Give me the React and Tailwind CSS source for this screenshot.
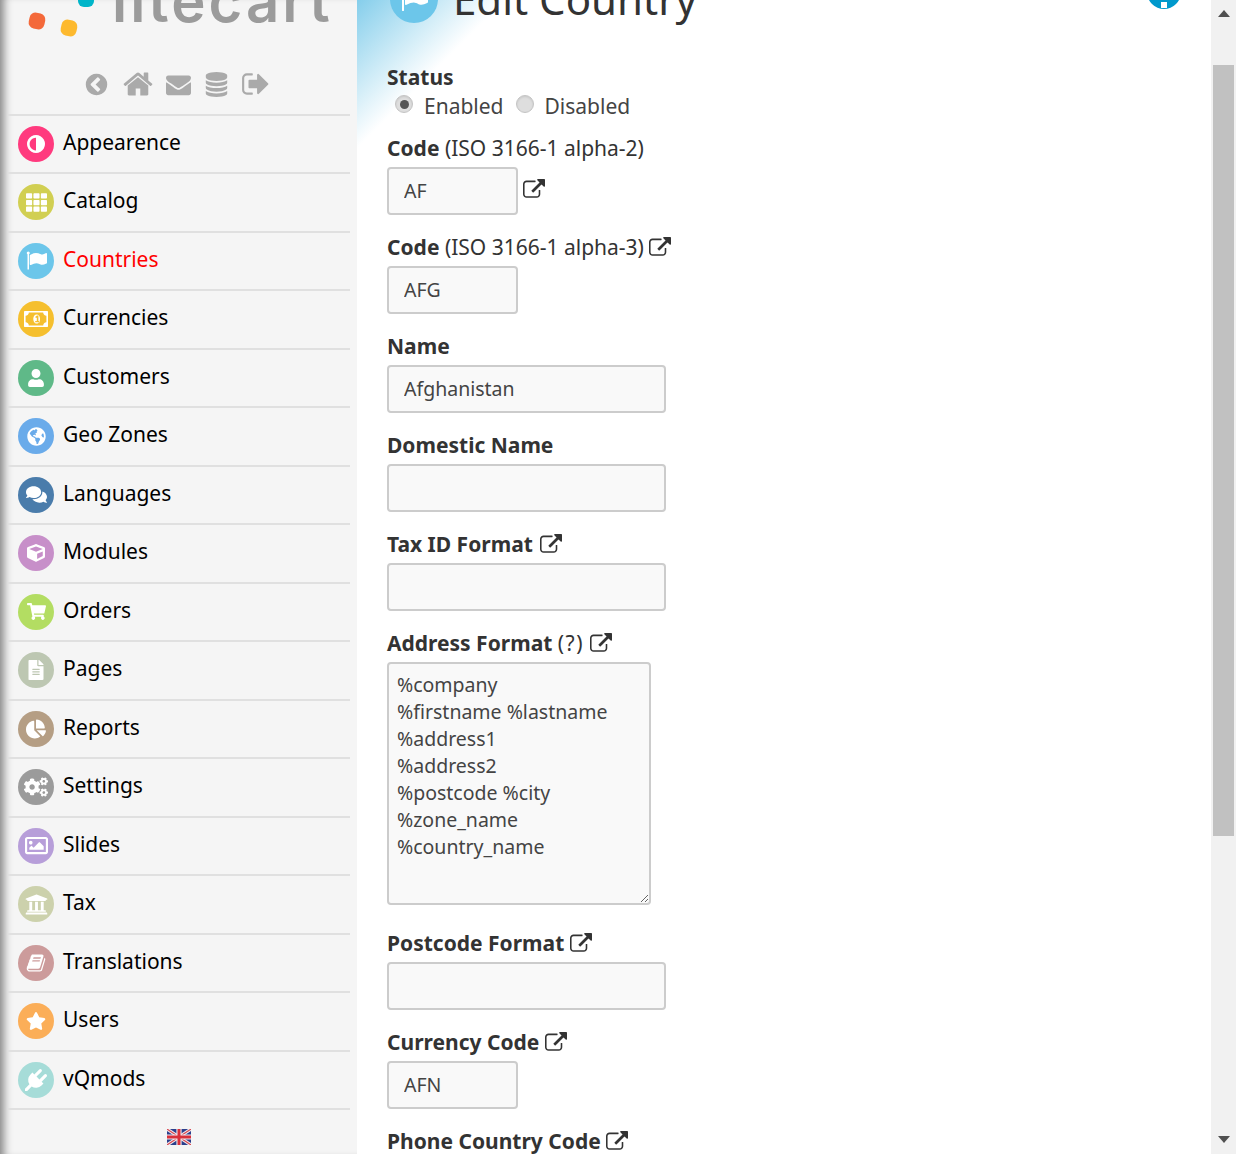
import {
  FaTh, FaUser, FaGlobeAmericas, FaComments, FaCube, FaShoppingCart,
  FaFileAlt, FaChartPie, FaCogs, FaRegImage, FaUniversity, FaStar,
} from 'react-icons/fa';

// Font Awesome 4 glyphs that the icon packages no longer carry
const Fa4 = ({ d, size, viewBox = '0 0 1792 1792', className = '' }) => (
  <svg width={size} height={size} viewBox={viewBox} fill="currentColor" className={className}>
    <path d={d} />
  </svg>
);

const paths = {
  link: 'M1408 928v320q0 119-84.5 203.5t-203.5 84.5h-832q-119 0-203.5-84.5t-84.5-203.5v-832q0-119 84.5-203.5t203.5-84.5h704q14 0 23 9t9 23v64q0 14-9 23t-23 9h-704q-66 0-113 47t-47 113v832q0 66 47 113t113 47h832q66 0 113-47t47-113v-320q0-14 9-23t23-9h64q14 0 23 9t9 23zm384-864v512q0 26-19 45t-45 19-45-19l-176-176-652 652q-10 10-23 10t-23-10l-114-114q-10-10-10-23t10-23l652-652-176-176q-19-19-19-45t19-45 45-19h512q26 0 45 19t19 45z',
  back: 'M1037 1395l102-102q19-19 19-45t-19-45l-307-307 307-307q19-19 19-45t-19-45l-102-102q-19-19-45-19t-45 19l-454 454q-19 19-19 45t19 45l454 454q19 19 45 19t45-19zm627-499q0 209-103 385.5t-279.5 279.5-385.5 103-385.5-103-279.5-279.5-103-385.5 103-385.5 279.5-279.5 385.5-103 385.5 103 279.5 279.5 103 385.5z',
  home: 'M1472 992v480q0 26-19 45t-45 19h-384v-384h-256v384h-384q-26 0-45-19t-19-45v-480q0-1 .5-3t.5-3l575-474 575 474q1 2 1 6zm223-69l-62 74q-8 9-21 11h-3q-13 0-21-7l-692-577-692 577q-12 8-24 7-13-2-21-11l-62-74q-8-10-7-23.5t11-21.5l719-599q32-26 76-26t76 26l244 204v-195q0-14 9-23t23-9h192q14 0 23 9t9 23v408l219 182q10 8 11 21.5t-7 23.5z',
  mail: 'M1792 710v794q0 66-47 113t-113 47h-1472q-66 0-113-47t-47-113v-794q44 49 101 87 362 246 497 345 57 42 92.5 65.5t94.5 48 110 24.5h2q51 0 110-24.5t94.5-48 92.5-65.5q170-123 498-345 57-39 100-87zm0-294q0 79-49 151t-122 123q-376 261-468 325-10 7-42.5 30.5t-54 38-52 32.5-57.5 27-50 9h-2q-23 0-50-9t-57.5-27-52-32.5-54-38-42.5-30.5q-91-64-262-182.5t-205-142.5q-62-42-117-115.5t-55-136.5q0-78 41.5-130t118.5-52h1472q65 0 112.5 47t47.5 113z',
  db: 'M896 768q237 0 443-43t325-127v170q0 69-103 128t-280 93.5-385 34.5-385-34.5-280-93.5-103-128v-170q119 84 325 127t443 43zm0 768q237 0 443-43t325-127v170q0 69-103 128t-280 93.5-385 34.5-385-34.5-280-93.5-103-128v-170q119 84 325 127t443 43zm0-384q237 0 443-43t325-127v170q0 69-103 128t-280 93.5-385 34.5-385-34.5-280-93.5-103-128v-170q119 84 325 127t443 43zm0-1152q208 0 385 34.5t280 93.5 103 128v128q0 69-103 128t-280 93.5-385 34.5-385-34.5-280-93.5-103-128v-128q0-69 103-128t280-93.5 385-34.5z',
  out: 'M704 1440q0 4 1 20t.5 26.5-3 23.5-10 19.5-20.5 6.5h-320q-119 0-203.5-84.5t-84.5-203.5v-704q0-119 84.5-203.5t203.5-84.5h320q13 0 22.5 9.5t9.5 22.5q0 4 1 20t.5 26.5-3 23.5-10 19.5-20.5 6.5h-320q-66 0-113 47t-47 113v704q0 66 47 113t113 47h312l11.5 1 11.5 3 8 5.5 7 9 2 13.5zm928-544q0 26-19 45l-544 544q-19 19-45 19t-45-19-19-45v-288h-448q-26 0-45-19t-19-45v-384q0-26 19-45t45-19h448v-288q0-26 19-45t45-19 45 19l544 544q19 19 19 45z',
  adjust: 'M768 1312v-1088q-148 0-273 73t-198 198-73 273 73 273 198 198 273 73zm768-544q0 209-103 385.5t-279.5 279.5-385.5 103-385.5-103-279.5-279.5-103-385.5 103-385.5 279.5-279.5 385.5-103 385.5 103 279.5 279.5 103 385.5z',
  plug: 'M1755 453q37 38 37 90.5t-37 90.5l-401 400 150 150-160 160q-163 163-389.5 186.5t-411.5-100.5l-362 362h-181v-181l362-362q-124-185-100.5-411.5t186.5-389.5l160-160 150 150 400-401q38-37 91-37t90 37 37 90.5-37 90.5l-400 401 234 234 401-400q38-37 91-37t90 37z',
  book: 'M1703 478q40 57 18 129l-275 906q-19 64-76.5 107.5t-122.5 43.5h-923q-77 0-148.5-53.5t-99.5-131.5q-24-67-2-127 0-4 3-27t4-37q1-8-3-21.5t-3-19.5q2-11 8-21t16.5-23.5 16.5-23.5q23-38 45-91.5t30-91.5q3-10 .5-30t-.5-28q3-11 17-28t17-23q21-36 42-92t25-90q1-9-2.5-32t.5-28q4-13 22-30.5t22-22.5q19-26 42.5-84.5t27.5-96.5q1-8-3-25.5t-2-26.5q2-8 9-18t18-23 17-21q8-12 16.5-30.5t15-35 16-36 19.5-32 26.5-23.5 36-11.5 47.5 5.5l-1 3q38-9 51-9h761q74 0 114 56t18 130l-274 906q-36 119-71.5 153.5t-128.5 34.5h-869q-27 0-38 15-11 16-1 43 24 70 144 70h923q29 0 56-15.5t35-41.5l300-987q7-22 5-57 38 15 59 43zm-1064 2q-4 13 2 22.5t20 9.5h608q13 0 25.5-9.5t16.5-22.5l21-64q4-13-2-22.5t-20-9.5h-608q-13 0-25.5 9.5t-16.5 22.5zm-83 256q-4 13 2 22.5t20 9.5h608q13 0 25.5-9.5t16.5-22.5l21-64q4-13-2-22.5t-20-9.5h-608q-13 0-25.5 9.5t-16.5 22.5z',
  flag: 'M320 256q0 72-64 110v1266q0 13-9.5 22.5t-22.5 9.5h-64q-13 0-22.5-9.5t-9.5-22.5v-1266q-64-38-64-110 0-53 37.5-90.5t90.5-37.5 90.5 37.5 37.5 90.5zm1472 64v763q0 25-12.5 38.5t-39.5 27.5q-215 116-369 116-61 0-123.5-22t-108.5-48-115.5-48-142.5-22q-192 0-464 146-17 9-33 9-26 0-45-19t-19-45v-742q0-32 31-55 21-14 79-43 236-120 421-120 107 0 200 29t219 88q38 19 88 19 54 0 117.5-21t110-47 88-47 54.5-21q26 0 45 19t19 45z',
  money: 'M704 1152h384v-96h-128v-448h-114l-148 137 77 80q42-37 55-57h2v288h-128v96zm384-256q0 70-19 135t-54.5 115.5-85 81-109.5 30.5-109.5-30.5-85-81-54.5-115.5-19-135 19-135 54.5-115.5 85-81 109.5-30.5 109.5 30.5 85 81 54.5 115.5 19 135zm512 256v-512q-106 0-181-75t-75-181h-1152q0 106-75 181t-181 75v512q106 0 181 75t75 181h1152q0-106 75-181t181-75zm128-832v1152q0 26-19 45t-45 19h-1792q-26 0-45-19t-19-45v-1152q0-26 19-45t45-19h1792q26 0 45 19t19 45z',
};

const menu = [
  { name: 'Appearence', bg: 'bg-[#ff3a7e]', icon: <Fa4 d={paths.adjust} viewBox="0 0 1536 1536" size={18} /> },
  { name: 'Catalog', bg: 'bg-[#d1cf52]', icon: <FaTh size={21} /> },
  { name: 'Countries', bg: 'bg-[#6cc6ea]', active: true, icon: <Fa4 d={paths.flag} size={21} /> },
  { name: 'Currencies', bg: 'bg-[#f5bf2e]', icon: <Fa4 d={paths.money} viewBox="-192 0 1920 1792" size={24} /> },
  { name: 'Customers', bg: 'bg-[#5fb988]', icon: <FaUser size={18} /> },
  { name: 'Geo Zones', bg: 'bg-[#6aabea]', icon: <FaGlobeAmericas size={19} /> },
  { name: 'Languages', bg: 'bg-[#4a7cab]', icon: <FaComments size={21} /> },
  { name: 'Modules', bg: 'bg-[#c78fc9]', icon: <FaCube size={18} /> },
  { name: 'Orders', bg: 'bg-[#b3dd62]', icon: <FaShoppingCart size={19} /> },
  { name: 'Pages', bg: 'bg-[#bdc7b2]', icon: <FaFileAlt size={20} /> },
  { name: 'Reports', bg: 'bg-[#b59e84]', icon: <FaChartPie size={20} /> },
  { name: 'Settings', bg: 'bg-[#9b9b9b]', icon: <FaCogs size={24} /> },
  { name: 'Slides', bg: 'bg-[#b79ed9]', icon: <FaRegImage size={23} /> },
  { name: 'Tax', bg: 'bg-[#ccd1ac]', icon: <FaUniversity size={23} /> },
  { name: 'Translations', bg: 'bg-[#cc9b9b]', icon: <Fa4 d={paths.book} size={20} /> },
  { name: 'Users', bg: 'bg-[#fbae58]', icon: <FaStar size={20} /> },
  { name: 'vQmods', bg: 'bg-[#a6dcd8]', icon: <Fa4 d={paths.plug} size={22} /> },
];

const LinkIcon = ({ className = 'align-[-4px]' }) => (
  <Fa4 d={paths.link} size={22} className={`inline-block text-[#333] ${className}`} />
);

function UkFlag() {
  return (
    <svg width="24" height="16" viewBox="0 0 24 16" className="block">
      <rect width="24" height="16" fill="#2b3f8c" />
      <path d="M0 0L24 16M24 0L0 16" stroke="#f1e9ec" strokeWidth="3.2" />
      <path d="M0 0L24 16M24 0L0 16" stroke="#d8464f" strokeWidth="1.1" />
      <path d="M12 0V16M0 8H24" stroke="#f1e9ec" strokeWidth="5.2" />
      <path d="M12 0V16M0 8H24" stroke="#d9303a" strokeWidth="3" />
    </svg>
  );
}

function Sidebar() {
  return (
    <aside className="w-[357px] shrink-0 bg-[#f5f5f5] pl-2 pr-[7px] shadow-[inset_10px_0_8px_-6px_rgba(0,0,0,0.45)]">
      <div className="relative h-[113.5px] overflow-hidden">
        {/* logo, mostly scrolled off the top */}
        <span className="absolute left-[21px] top-[13px] h-4 w-4 rotate-12 rounded-[6px] bg-[#f4693a]" />
        <span className="absolute left-[53px] top-[20px] h-4 w-4 rotate-12 rounded-[6px] bg-[#fdb92e]" />
        <span className="absolute left-[70px] top-[-9px] h-4 w-4 rounded-[6px] bg-[#00b5c9]" />
        <span className="absolute left-[104px] top-[-41px] text-[58px] leading-[84px] font-semibold tracking-[3px] text-[#9b9b9b] font-['Inter',sans-serif]">
          litecart
        </span>
        <div className="absolute left-[76px] top-[68px] flex items-center gap-[12.5px] text-[#aaaaaa]">
          <Fa4 d={paths.back} size={25} />
          <Fa4 d={paths.home} size={32} />
          <Fa4 d={paths.mail} size={25} />
          <Fa4 d={paths.db} size={25} />
          <Fa4 d={paths.out} size={30} />
        </div>
      </div>
      <ul className="border-t-2 border-[#e0e0e0]">
        {menu.map((item) => (
          <li key={item.name} className="flex h-[58.5px] items-center gap-[9px] border-b-2 border-[#e0e0e0] pl-[10px]">
            <span className={`flex h-9 w-9 items-center justify-center rounded-full text-white ${item.bg}`}>
              {item.icon}
            </span>
            <span className={`-mt-[2.8px] text-[21px] ${item.active ? 'text-[#ff0000]' : 'text-black'}`}>{item.name}</span>
          </li>
        ))}
      </ul>
      <div className="flex justify-center pt-[19px]">
        <UkFlag />
      </div>
    </aside>
  );
}

function Label({ children }) {
  return <div className="h-6 text-[21px] leading-6 text-[#333]">{children}</div>;
}

function Field({ label, value = '', width = 'w-[279px]', className = 'mt-[20px]', after }) {
  return (
    <div className={className}>
      <Label>{label}</Label>
      <div className="mt-[7px] flex items-start">
        <input
          readOnly
          defaultValue={value}
          className={`h-12 rounded border-2 border-[#cccccc] bg-[#f9f9f9] pb-0.5 pl-[15px] text-[19.5px] text-[#444] outline-none ${width}`}
        />
        {after}
      </div>
    </div>
  );
}

function Radio({ label, checked }) {
  return (
    <span className="flex items-center">
      <span className="-mt-1 flex h-[18px] w-[18px] items-center justify-center rounded-full border border-[#c4c4c4] bg-[#dedede] shadow-[inset_0_1px_2px_rgba(0,0,0,0.1)]">
        {checked && <span className="h-[9px] w-[9px] rounded-full bg-[#555]" />}
      </span>
      <span className="ml-[11px] text-[21px] leading-6 text-[#444]">{label}</span>
    </span>
  );
}

function Scrollbar() {
  return (
    <div className="flex w-[25px] shrink-0 flex-col bg-[#f1f1f1]">
      <div className="flex h-[65px] justify-center pt-[10px]">
        <svg width="12" height="7" viewBox="0 0 12 7" className="block"><path d="M6 0L12 7H0z" fill="#505050" /></svg>
      </div>
      <div className="mx-[2px] h-[771px] bg-[#c1c1c1]" />
      <div className="flex flex-1 items-end justify-center pb-[11px]">
        <svg width="12" height="7" viewBox="0 0 12 7" className="block"><path d="M0 0H12L6 7z" fill="#505050" /></svg>
      </div>
    </div>
  );
}

const addressFormat = '%company\n%firstname %lastname\n%address1\n%address2\n%postcode %city\n%zone_name\n%country_name';

export default function App() {
  return (
    <div className="flex h-[1154px] w-[1236px] overflow-hidden bg-white font-['Noto_Sans',sans-serif]">
      <Sidebar />
      <main className="min-w-0 flex-1 bg-[linear-gradient(135deg,#85ceeb,#ffffff_105px)] pl-[30px]">
        <div className="-mt-[25px] flex h-12 items-center pl-[3px]">
          <span className="flex h-12 w-12 items-center justify-center rounded-full bg-[#6cc6ea] text-white">
            <Fa4 d={paths.flag} size={28} />
          </span>
          <h1 className="ml-[15px] text-[42px] leading-none text-[#333]">Edit Country</h1>
          <span className="ml-auto mr-[30px] flex h-[34px] w-[34px] items-end justify-center self-start rounded-full bg-[#0099cc] pb-[1px]">
            <span className="h-[6px] w-[6px] bg-white" />
          </span>
        </div>

        <div className="mt-[42px]">
          <Label><b>Status</b></Label>
          <div className="mt-[5px] flex items-center gap-[12px] pl-2">
            <Radio label="Enabled" checked />
            <Radio label="Disabled" />
          </div>
        </div>

        <Field
          className="mt-[18px]"
          label={<><b>Code</b> (ISO 3166-1 alpha-2)</>}
          value="AF"
          width="w-[131px]"
          after={<LinkIcon className="ml-[5px] mt-[12px]" />}
        />
        <Field label={<><b>Code</b> (ISO 3166-1 alpha-3) <LinkIcon /></>} value="AFG" width="w-[131px]" />
        <Field label={<b>Name</b>} value="Afghanistan" />
        <Field label={<b>Domestic Name</b>} />
        <Field label={<><b>Tax ID Format</b> <LinkIcon className="ml-[2px] align-[-4px]" /></>} />

        <div className="mt-[20px]">
          <Label><b>Address Format</b> <span className="tracking-[1.5px]">(?)</span> <LinkIcon /></Label>
          <textarea
            readOnly
            defaultValue={addressFormat}
            className="mt-[7px] block h-[243px] w-[264px] rounded border-2 border-[#cccccc] bg-[#f9f9f9] pl-2 pt-[7px] text-[19.5px] leading-[27px] text-[#444] outline-none"
          />
        </div>

        <Field className="mt-[26px]" label={<><b>Postcode Format</b> <LinkIcon /></>} />
        <Field label={<><b>Currency Code</b> <LinkIcon /></>} value="AFN" width="w-[131px]" />
        <div className="mt-[20px]">
          <Label><b>Phone Country Code</b> <LinkIcon /></Label>
        </div>
      </main>
      <Scrollbar />
    </div>
  );
}
